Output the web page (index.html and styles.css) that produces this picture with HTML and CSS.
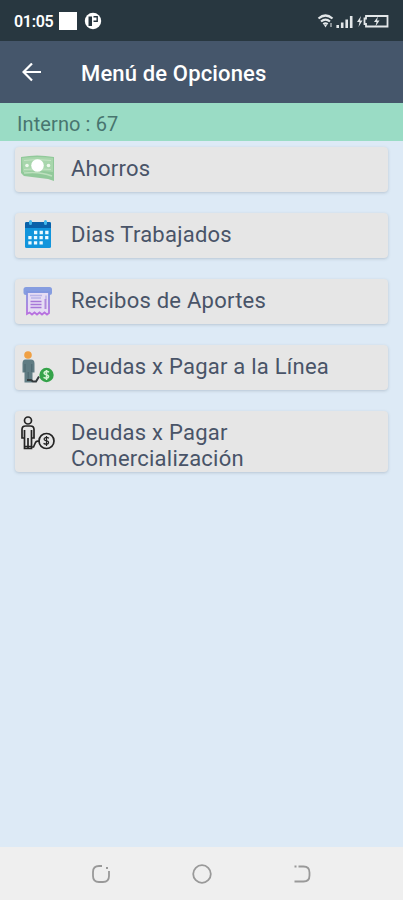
FILE: index.html
```
<!DOCTYPE html>
<html lang="es">
<head>
<meta charset="utf-8">
<title>Menú de Opciones</title>
<link rel="stylesheet" href="styles.css">
</head>
<body>
<div class="screen">
  <div class="status">
    <span class="clock">01:05</span>
    <span class="square"></span>
    <svg class="badge" width="18" height="18" viewBox="0 0 18 18"><circle cx="9" cy="9" r="8.2" fill="#fff"/><path d="M4.500 4.500h3.500v9.500h-3.500z" fill="#26343e"/><path d="M9.500 4.800h3.700v4.400H9.500" fill="none" stroke="#26343e" stroke-width="1.400"/></svg>
    <svg class="signals" width="74" height="20" viewBox="0 0 74 20" fill="none" stroke="#e3e7e9">
      <path d="M1.500 7.500Q8.500 1.500 15.500 7.500M4 10.500Q8.500 6.600 13 10.500M6.300 13.200Q8.500 11.500 10.700 13.200" stroke-width="2.200"/>
      <path d="M7 14h3l-1.500 2.500z" fill="#e3e7e9" stroke="none"/>
      <path d="M14 12v4" stroke-width="1"/>
      <path d="M20.700 14v3M25.200 11.500V17M29.700 8.500V17M34.200 5V17" stroke-width="2.600"/>
      <path d="M44 5l-4 6h2.500l-1 5 4-6.500H43z" fill="#e3e7e9" stroke="none"/>
      <path d="M49 5h21.500v10.500H49v-2.500h-1.500v-5.500H49z" stroke-width="1.800"/>
      <path d="M61 5.500l-4 5.500h2.500l-1 4.500 4-6H60z" fill="#e3e7e9" stroke="none"/>
    </svg>
  </div>
  <header class="appbar">
    <svg width="20" height="20" viewBox="0 0 20 20" fill="none" stroke="#fff" stroke-width="2.200"><path d="M19 9H2M10 .5L1.500 9 10 17.500"/></svg>
    <h1 class="title">Menú de Opciones</h1>
  </header>
  <div class="intern">Interno : 67</div>
  <main class="menu">
    <div class="card">
      <svg class="icon" width="36" height="36" viewBox="0 0 36 36">
        <path d="M1 5q16-3 33 0v24l-6-2-24-3-3-3z" fill="#91c99a"/>
        <path d="M2 6q16-2 31 0v14q-16-2-30 0z" fill="#a8d6ac"/>
        <path d="M4 21q15-2 28 3" fill="none" stroke="#bde0be" stroke-width="1.500"/>
        <path d="M4 8.500q13-2 27 0M4 17.500q13-1.500 27 0" fill="none" stroke="#c5e4c5" stroke-width="1"/>
        <circle cx="17.500" cy="13.500" r="6.300" fill="#fff"/><circle cx="7" cy="13.500" r="1.800" fill="#eef8ed"/><circle cx="28.500" cy="13.500" r="1.800" fill="#eef8ed"/>
      </svg>
      <span class="label">Ahorros</span>
    </div>
    <div class="card">
      <svg class="icon" width="36" height="36" viewBox="0 0 36 36">
        <rect x="5" y="4" width="26" height="26" rx="1.500" fill="#1295dc"/>
        <path d="M5 10V5.500Q5 4 6.500 4h23Q31 4 31 5.500V10z" fill="#0a61a9"/>
        <path d="M10.500 3.500v2M25.500 3.500v2" stroke="#42b9ed" stroke-width="3" stroke-linecap="round"/>
        <g stroke="#eefaff" stroke-width="3.300" stroke-dasharray="3.300 2.300"><path d="M14 14.500h14.500M8.300 19.700h20.200M8.300 24.900h14.500"/></g>
      </svg>
      <span class="label">Dias Trabajados</span>
    </div>
    <div class="card">
      <svg class="icon" width="36" height="36" viewBox="0 0 36 36">
        <defs><linearGradient id="violet" x2="0" y2="1"><stop stop-color="#8197df"/><stop offset="1" stop-color="#ba70df"/></linearGradient></defs>
        <rect x="3.500" y="3" width="28.500" height="8" rx="2.500" fill="#869de0"/>
        <path d="M7 8h22v21l-2 1.500-2.500-2-2.500 2-2.500-2-2.500 2-2.500-2-2.500 2-2.500-2L7 30z" fill="#e6ddf4" stroke="url(#violet)" stroke-width="1.800"/>
        <path d="M10 11.500h12M11 14h10M26 11.500v4" stroke="#b9b5e8" stroke-width="1.500"/>
        <path d="M10.500 17.500h11M10.500 20.500h11M10.500 23.500h11" stroke="#a777d8" stroke-width="1.600"/>
        <path d="M25.500 15v10" stroke="#b28bdc" stroke-width="2"/>
      </svg>
      <span class="label">Recibos de Aportes</span>
    </div>
    <div class="card">
      <svg class="icon" width="36" height="36" viewBox="0 0 36 36">
        <circle cx="8" cy="5" r="3.800" fill="#efa044"/>
        <path d="M5.500 9.500h5.500q3.500 0 3.500 4v9h-2v10H4.500v-10h-2v-9q0-4 3-4z" fill="#607c83"/>
        <path d="M5 14v8M11.800 14v8M8.200 22v9" stroke="#4c666f"/>
        <path d="M7 30h4l2 1.500h3l3-5" fill="none" stroke="#343b3d" stroke-width="2"/>
        <circle cx="26.500" cy="25" r="7.200" fill="#35a34a"/>
        <path d="M29 22.200q-2.500-1.500-4.200-.3c-2 2 1 2.700 2 3 3 1 1.700 3.500-.5 3.300q-1.300 0-2.800-.8M26.500 20v10" fill="none" stroke="#d6f4d5" stroke-width="1.500"/>
      </svg>
      <span class="label">Deudas x Pagar a la Línea</span>
    </div>
    <div class="card tall">
      <svg class="icon" width="36" height="36" viewBox="0 0 36 36" fill="none" stroke="#242424" stroke-width="1.700">
        <circle cx="8" cy="4.500" r="3.500"/>
        <path d="M4.500 22h-2.500v-8.500q0-3.500 3.500-3.500h5q3.500 0 3.500 3.500v8.500h-2.500M4.500 14v18.500h7V14M8 22v10.500M5 30.500h6"/>
        <path d="M11.500 31h2l2-4.500q1-2 4-1"/>
        <circle cx="26.500" cy="25" r="7.500"/>
        <path d="M29 22.200q-2.500-1.500-4.200-.3c-2 2 1 2.700 2 3 3 1 1.700 3.500-.5 3.300q-1.300 0-2.800-.8M26.500 20v10" stroke-width="1.200"/>
      </svg>
      <span class="label">Deudas x Pagar<br>Comercialización</span>
    </div>
  </main>
  <nav class="navbar">
    <svg width="20" height="20" viewBox="0 0 20 20"><path d="M11 2H8Q2 2 2 8v4q0 6 6 6h4q6 0 6-6V7M15 4h2"/></svg>
    <svg width="20" height="20" viewBox="0 0 20 20"><circle cx="10" cy="10" r="8.800"/></svg>
    <svg width="20" height="20" viewBox="0 0 20 20"><path d="M6.500 2.500h5q6 0 6 6v3q0 6-6 6h-9M2.500 2.500h2"/></svg>
  </nav>
</div>
</body>
</html>
```
FILE: styles.css
```
* { box-sizing: border-box; }
body { margin: 0; font-family: Roboto, sans-serif; }
.screen { width: 403px; height: 900px; display: flex; flex-direction: column; background: #ddeaf6; overflow: hidden; }
.status { height: 41px; flex: none; display: flex; align-items: center; padding: 0 12px 0 14px; background: #283740; color: #fff; }
.clock { width: 40px; margin-top: 2px; font-size: 16px; font-weight: 600; letter-spacing: -0.3px; white-space: nowrap; }
.square { width: 18px; height: 18px; margin-left: 5px; background: #fff; }
.badge { margin-left: 7px; }
.signals { margin-left: auto; }
.appbar { height: 62px; flex: none; display: flex; align-items: center; padding: 1px 22px 0; background: #45566b; }
.title { margin: 2px 0 0 39px; color: #fff; font-size: 22px; font-weight: 500; line-height: 28px; letter-spacing: 0.15px; white-space: nowrap; }
.intern { height: 38px; flex: none; padding: 8px 17px 0; background: #9adcc5; color: #48756f; font-size: 20px; line-height: 26px; letter-spacing: 0.1px; }
.menu { flex: 1; display: flex; flex-direction: column; gap: 21px; padding: 6px 15px 0; }
.card { height: 45px; flex: none; display: flex; align-items: flex-start; padding: 5px 5px 0; border-radius: 4px; background: #e6e6e6; box-shadow: 0 1px 3px rgba(70, 90, 110, 0.25); }
.tall { height: 61px; }
.icon { flex: none; }
.label { margin: 4px 0 0 15px; color: #495468; font-size: 22px; line-height: 26px; letter-spacing: 0.24px; white-space: nowrap; }
.navbar { height: 53px; flex: none; display: flex; justify-content: space-between; align-items: center; padding: 0 91px; background: #efefef; }
.navbar svg { fill: none; stroke: #999; stroke-width: 1.8; }
```
